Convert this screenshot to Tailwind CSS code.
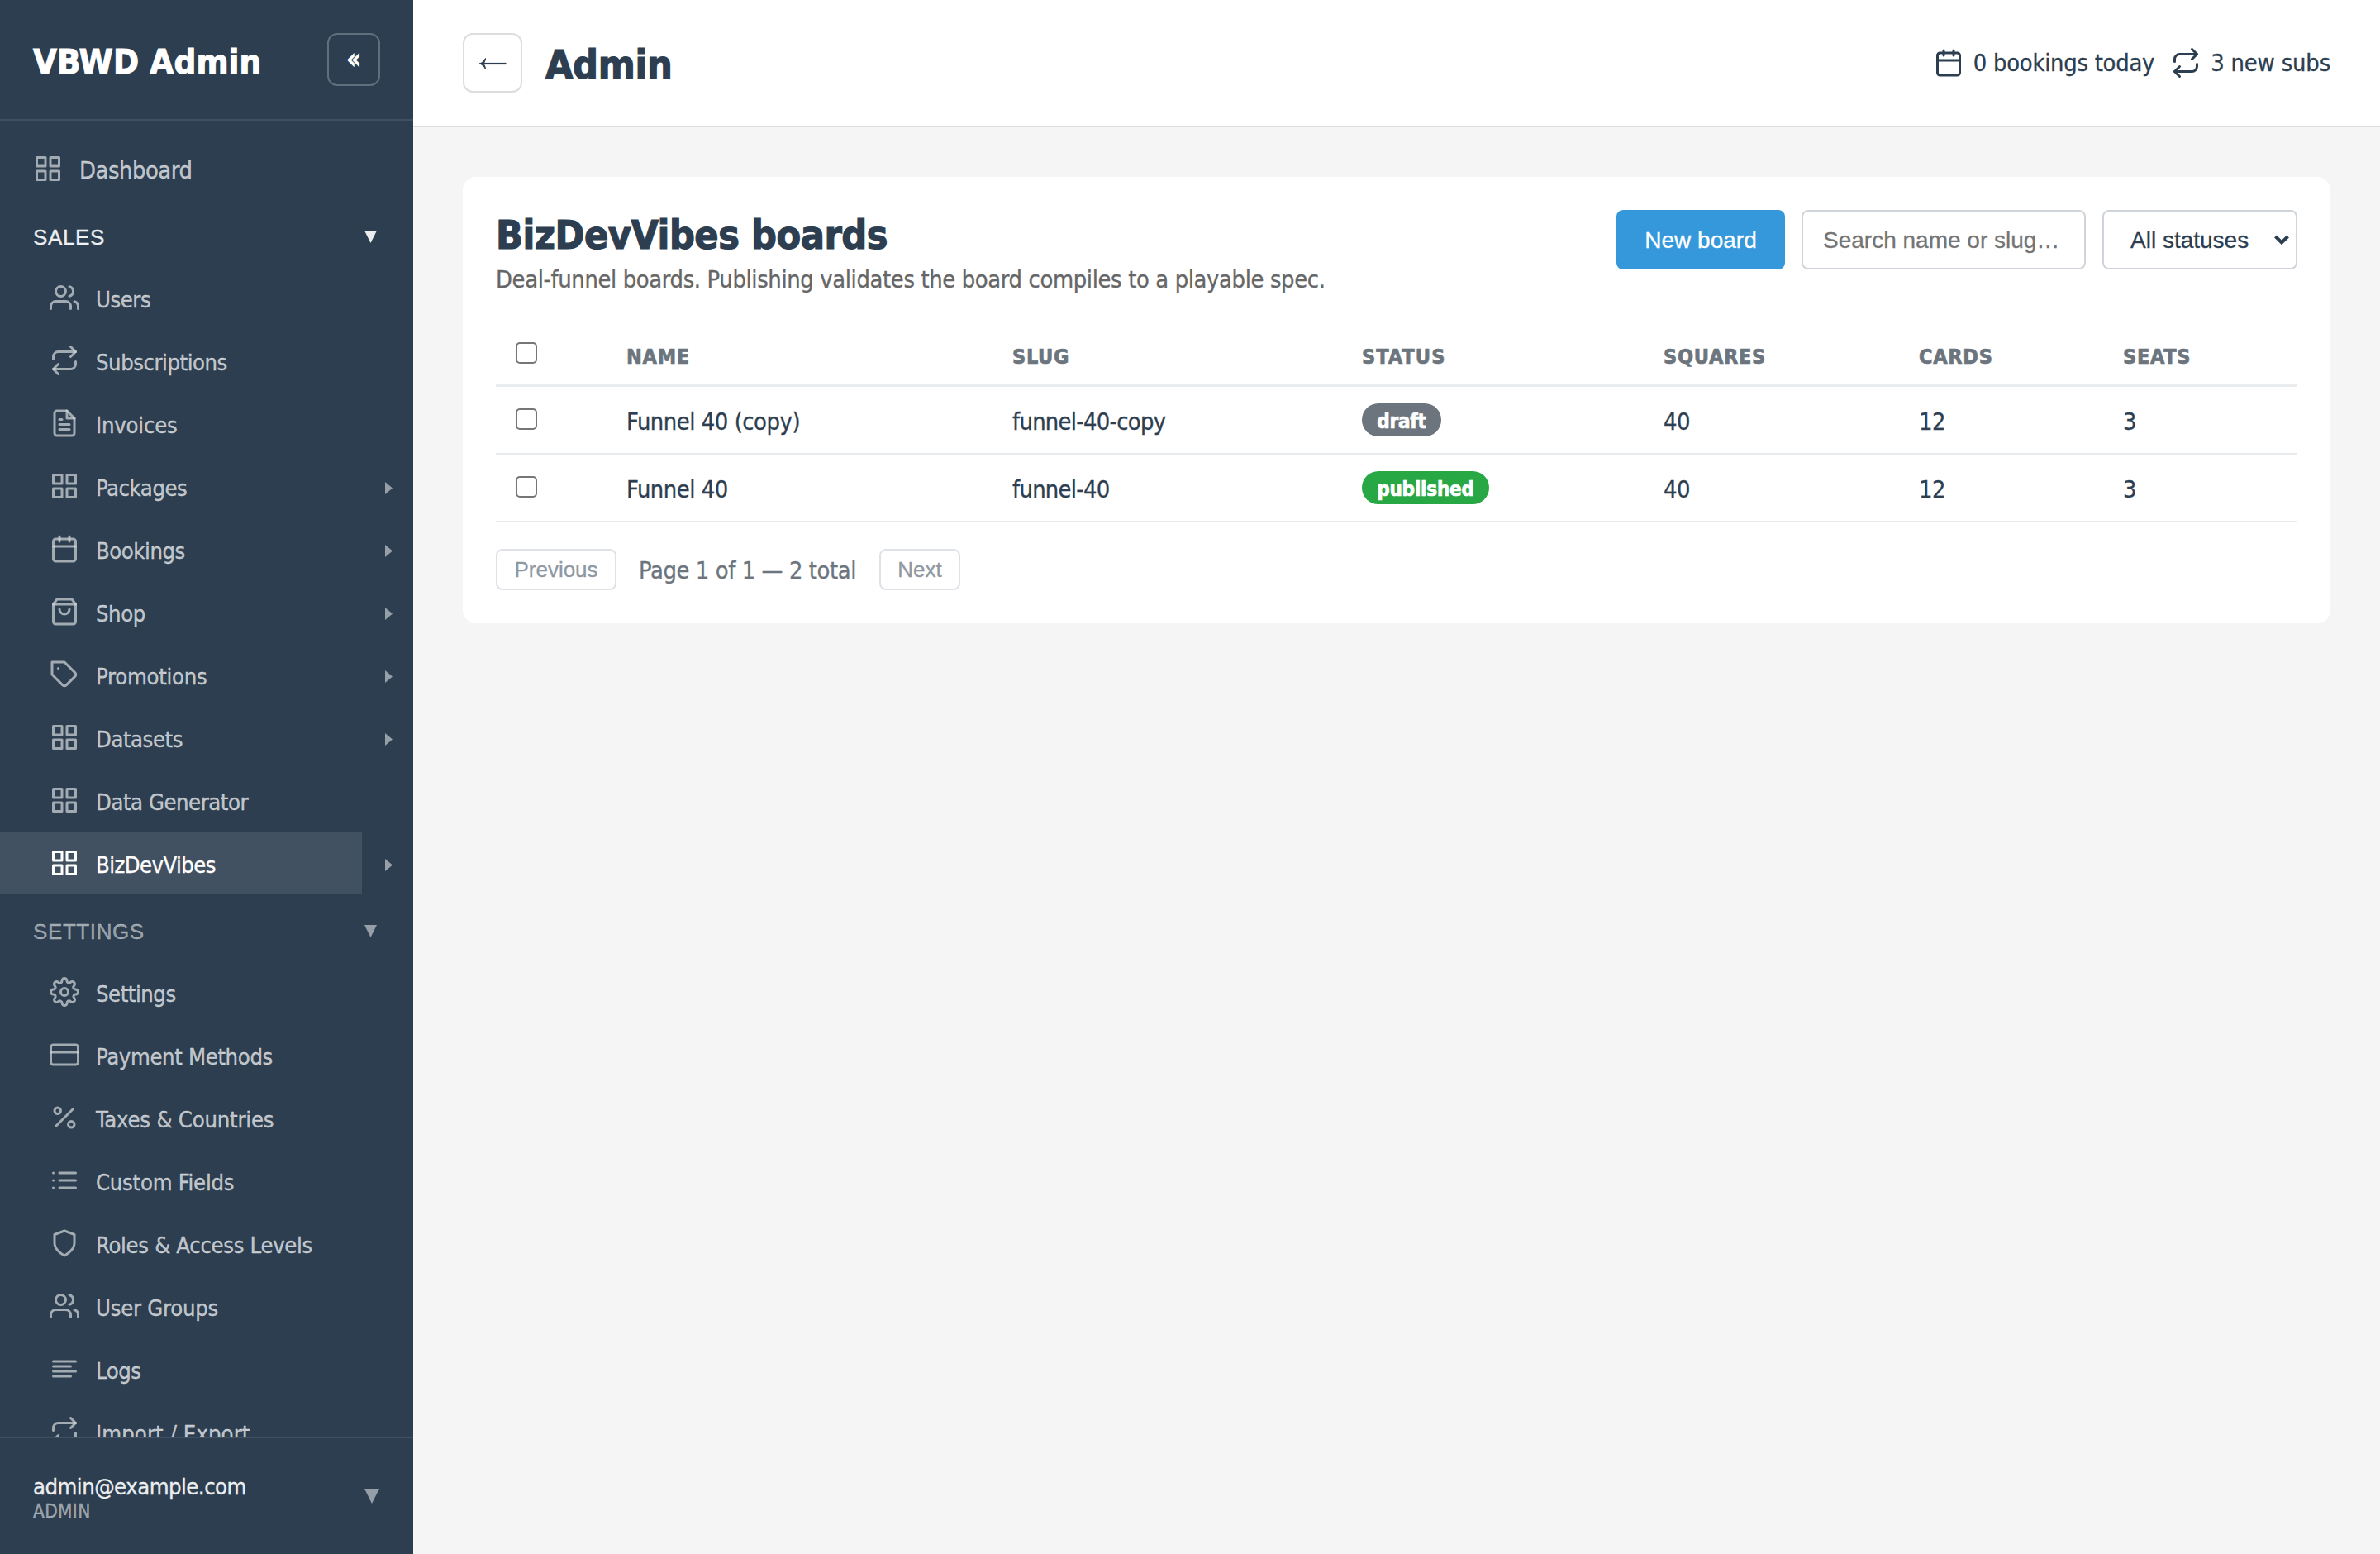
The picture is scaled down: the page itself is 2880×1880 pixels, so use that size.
<!DOCTYPE html>
<html lang="en">
<head>
<meta charset="utf-8">
<title>VBWD Admin</title>
<script src="https://cdn.jsdelivr.net/npm/@tailwindcss/browser@4"></script>
</head>
<body class="w-[2880px] h-[1880px] overflow-hidden flex bg-[#f5f5f5] text-[#2c3e50] font-['DejaVu_Sans_Condensed','DejaVu_Sans',sans-serif] [-webkit-text-stroke:0.3px]">

<!-- Icon sprite -->
<svg class="hidden" aria-hidden="true">
  <symbol id="grid" viewBox="0 0 24 24"><rect x="3" y="3" width="7" height="7"/><rect x="14" y="3" width="7" height="7"/><rect x="14" y="14" width="7" height="7"/><rect x="3" y="14" width="7" height="7"/></symbol>
  <symbol id="users" viewBox="0 0 24 24"><path d="M17 21v-2a4 4 0 0 0-4-4H5a4 4 0 0 0-4 4v2"/><circle cx="9" cy="7" r="4"/><path d="M23 21v-2a4 4 0 0 0-3-3.87"/><path d="M16 3.13a4 4 0 0 1 0 7.75"/></symbol>
  <symbol id="repeat" viewBox="0 0 24 24"><path d="M17 1l4 4-4 4"/><path d="M3 11V9a4 4 0 0 1 4-4h14"/><path d="M7 23l-4-4 4-4"/><path d="M21 13v2a4 4 0 0 1-4 4H3"/></symbol>
  <symbol id="file" viewBox="0 0 24 24"><path d="M14 2H6a2 2 0 0 0-2 2v16a2 2 0 0 0 2 2h12a2 2 0 0 0 2-2V8z"/><path d="M14 2v6h6"/><path d="M16 13H8"/><path d="M16 17H8"/><path d="M10 9H8"/></symbol>
  <symbol id="calendar" viewBox="0 0 24 24"><rect x="3" y="4" width="18" height="18" rx="2"/><path d="M16 2v4"/><path d="M8 2v4"/><path d="M3 10h18"/></symbol>
  <symbol id="bag" viewBox="0 0 24 24"><path d="M6 2L3 6v14a2 2 0 0 0 2 2h14a2 2 0 0 0 2-2V6l-3-4z"/><path d="M3 6h18"/><path d="M16 10a4 4 0 0 1-8 0"/></symbol>
  <symbol id="tag" viewBox="0 0 24 24"><path d="M20.59 13.41l-7.17 7.17a2 2 0 0 1-2.83 0L2 12V2h10l8.59 8.59a2 2 0 0 1 0 2.82z"/><path d="M7 7h.01"/></symbol>
  <symbol id="gear" viewBox="0 0 24 24"><circle cx="12" cy="12" r="3"/><path d="M19.4 15a1.65 1.65 0 0 0 .33 1.82l.06.06a2 2 0 0 1-2.83 2.83l-.06-.06a1.65 1.65 0 0 0-1.82-.33 1.65 1.65 0 0 0-1 1.51V21a2 2 0 0 1-4 0v-.09A1.65 1.65 0 0 0 9 19.4a1.65 1.65 0 0 0-1.82.33l-.06.06a2 2 0 0 1-2.83-2.83l.06-.06a1.65 1.65 0 0 0 .33-1.82 1.65 1.65 0 0 0-1.51-1H3a2 2 0 0 1 0-4h.09A1.65 1.65 0 0 0 4.6 9a1.65 1.65 0 0 0-.33-1.82l-.06-.06a2 2 0 0 1 2.83-2.83l.06.06a1.65 1.65 0 0 0 1.82.33H9a1.65 1.65 0 0 0 1-1.51V3a2 2 0 0 1 4 0v.09a1.65 1.65 0 0 0 1 1.51 1.65 1.65 0 0 0 1.82-.33l.06-.06a2 2 0 0 1 2.83 2.83l-.06.06a1.65 1.65 0 0 0-.33 1.82V9a1.65 1.65 0 0 0 1.51 1H21a2 2 0 0 1 0 4h-.09a1.65 1.65 0 0 0-1.51 1z"/></symbol>
  <symbol id="card" viewBox="0 0 24 24"><rect x="1" y="4" width="22" height="16" rx="2"/><path d="M1 10h22"/></symbol>
  <symbol id="percent" viewBox="0 0 24 24"><path d="M19 5L5 19"/><circle cx="6.5" cy="6.5" r="2.5"/><circle cx="17.5" cy="17.5" r="2.5"/></symbol>
  <symbol id="list" viewBox="0 0 24 24"><path d="M8 6h13"/><path d="M8 12h13"/><path d="M8 18h13"/><path d="M3 6h.01"/><path d="M3 12h.01"/><path d="M3 18h.01"/></symbol>
  <symbol id="shield" viewBox="0 0 24 24"><path d="M12 22s8-4 8-10V5l-8-3-8 3v7c0 6 8 10 8 10z"/></symbol>
  <symbol id="lines" viewBox="0 0 24 24"><path d="M17 10H3"/><path d="M21 6H3"/><path d="M21 14H3"/><path d="M17 18H3"/></symbol>
  <symbol id="caret" viewBox="0 0 9 15"><path d="M0 0L9 7.5L0 15z"/></symbol>
  <symbol id="down" viewBox="0 0 16 16"><path d="M0 0H16L8 16z"/></symbol>
</svg>

<aside class="w-[500px] h-full shrink-0 flex flex-col bg-[#2c3e50] text-white">
  <div class="h-[146px] shrink-0 flex items-center justify-between pl-10 pr-10 border-b-2 border-white/10">
    <h2 class="pt-[6px] text-[41.6px] leading-[50px] font-bold tracking-[0.15px] [-webkit-text-stroke:1px]">VBWD Admin</h2>
    <button class="size-16 rounded-xl border-2 border-white/25 flex items-center justify-center pb-[2px] text-[32px] leading-none [-webkit-text-stroke:1.2px]">«</button>
  </div>

  <nav class="flex-1 min-h-0 overflow-hidden pt-5 text-[27.2px] leading-[34px] tracking-[-0.45px] text-white/70 [&_svg]:shrink-0">
    <a class="h-[76px] flex items-center gap-5 pl-10 text-[28.8px]"><svg class="size-9 fill-none stroke-current stroke-2 opacity-80 [stroke-linecap:round] [stroke-linejoin:round]"><use href="#grid"/></svg><span class="pt-1">Dashboard</span></a>

    <button class="w-full h-20 flex items-center justify-between pt-[9px] pl-10 pr-11 font-['Liberation_Sans',sans-serif] text-[26px] tracking-[0.6px] text-white/90"><span>SALES</span><svg class="w-[15px] h-[15px] fill-current"><use href="#down"/></svg></button>
    <a class="h-[76px] flex items-center gap-5 pl-[60px]"><svg class="size-9 fill-none stroke-current stroke-2 opacity-80 [stroke-linecap:round] [stroke-linejoin:round]"><use href="#users"/></svg><span class="pt-[5px]">Users</span></a>
    <a class="h-[76px] flex items-center gap-5 pl-[60px]"><svg class="size-9 fill-none stroke-current stroke-2 opacity-80 [stroke-linecap:round] [stroke-linejoin:round]"><use href="#repeat"/></svg><span class="pt-[5px]">Subscriptions</span></a>
    <a class="h-[76px] flex items-center gap-5 pl-[60px]"><svg class="size-9 fill-none stroke-current stroke-2 opacity-80 [stroke-linecap:round] [stroke-linejoin:round]"><use href="#file"/></svg><span class="pt-[5px] tracking-[-0.2px]">Invoices</span></a>
    <div class="h-[76px] flex items-center pr-[25px]"><a class="w-[438px] h-full flex items-center gap-5 pl-[60px]"><svg class="size-9 fill-none stroke-current stroke-2 opacity-80 [stroke-linecap:round] [stroke-linejoin:round]"><use href="#grid"/></svg><span class="pt-[5px]">Packages</span></a><svg class="w-[9px] h-[15px] ml-auto mt-1 fill-white/50"><use href="#caret"/></svg></div>
    <div class="h-[76px] flex items-center pr-[25px]"><a class="w-[438px] h-full flex items-center gap-5 pl-[60px]"><svg class="size-9 fill-none stroke-current stroke-2 opacity-80 [stroke-linecap:round] [stroke-linejoin:round]"><use href="#calendar"/></svg><span class="pt-[5px]">Bookings</span></a><svg class="w-[9px] h-[15px] ml-auto mt-1 fill-white/50"><use href="#caret"/></svg></div>
    <div class="h-[76px] flex items-center pr-[25px]"><a class="w-[438px] h-full flex items-center gap-5 pl-[60px]"><svg class="size-9 fill-none stroke-current stroke-2 opacity-80 [stroke-linecap:round] [stroke-linejoin:round]"><use href="#bag"/></svg><span class="pt-[5px]">Shop</span></a><svg class="w-[9px] h-[15px] ml-auto mt-1 fill-white/50"><use href="#caret"/></svg></div>
    <div class="h-[76px] flex items-center pr-[25px]"><a class="w-[438px] h-full flex items-center gap-5 pl-[60px]"><svg class="size-9 fill-none stroke-current stroke-2 opacity-80 [stroke-linecap:round] [stroke-linejoin:round]"><use href="#tag"/></svg><span class="pt-[5px] tracking-[-0.25px]">Promotions</span></a><svg class="w-[9px] h-[15px] ml-auto mt-1 fill-white/50"><use href="#caret"/></svg></div>
    <div class="h-[76px] flex items-center pr-[25px]"><a class="w-[438px] h-full flex items-center gap-5 pl-[60px]"><svg class="size-9 fill-none stroke-current stroke-2 opacity-80 [stroke-linecap:round] [stroke-linejoin:round]"><use href="#grid"/></svg><span class="pt-[5px]">Datasets</span></a><svg class="w-[9px] h-[15px] ml-auto mt-1 fill-white/50"><use href="#caret"/></svg></div>
    <a class="h-[76px] flex items-center gap-5 pl-[60px]"><svg class="size-9 fill-none stroke-current stroke-2 opacity-80 [stroke-linecap:round] [stroke-linejoin:round]"><use href="#grid"/></svg><span class="pt-[5px]">Data Generator</span></a>
    <div class="h-[76px] flex items-center pr-[25px]"><a class="w-[438px] h-full flex items-center gap-5 pl-[60px] bg-white/10 text-white"><svg class="size-9 fill-none stroke-current stroke-2 [stroke-linecap:round] [stroke-linejoin:round]"><use href="#grid"/></svg><span class="pt-[5px] tracking-[-0.55px]">BizDevVibes</span></a><svg class="w-[9px] h-[15px] ml-auto mt-1 fill-white/50"><use href="#caret"/></svg></div>

    <button class="w-full h-20 flex items-center justify-between pt-[9px] pl-10 pr-11 font-['Liberation_Sans',sans-serif] text-[26px] tracking-[0.6px] text-white/50"><span>SETTINGS</span><svg class="w-[15px] h-[15px] fill-current"><use href="#down"/></svg></button>
    <a class="h-[76px] flex items-center gap-5 pl-[60px]"><svg class="size-9 fill-none stroke-current stroke-2 opacity-80 [stroke-linecap:round] [stroke-linejoin:round]"><use href="#gear"/></svg><span class="pt-[5px]">Settings</span></a>
    <a class="h-[76px] flex items-center gap-5 pl-[60px]"><svg class="size-9 fill-none stroke-current stroke-2 opacity-80 [stroke-linecap:round] [stroke-linejoin:round]"><use href="#card"/></svg><span class="pt-[5px] tracking-[-0.35px]">Payment Methods</span></a>
    <a class="h-[76px] flex items-center gap-5 pl-[60px]"><svg class="size-9 fill-none stroke-current stroke-2 opacity-80 [stroke-linecap:round] [stroke-linejoin:round]"><use href="#percent"/></svg><span class="pt-[5px] tracking-[-0.2px]">Taxes &amp; Countries</span></a>
    <a class="h-[76px] flex items-center gap-5 pl-[60px]"><svg class="size-9 fill-none stroke-current stroke-2 opacity-80 [stroke-linecap:round] [stroke-linejoin:round]"><use href="#list"/></svg><span class="pt-[5px] tracking-[-0.25px]">Custom Fields</span></a>
    <a class="h-[76px] flex items-center gap-5 pl-[60px]"><svg class="size-9 fill-none stroke-current stroke-2 opacity-80 [stroke-linecap:round] [stroke-linejoin:round]"><use href="#shield"/></svg><span class="pt-[5px] tracking-[-0.32px]">Roles &amp; Access Levels</span></a>
    <a class="h-[76px] flex items-center gap-5 pl-[60px]"><svg class="size-9 fill-none stroke-current stroke-2 opacity-80 [stroke-linecap:round] [stroke-linejoin:round]"><use href="#users"/></svg><span class="pt-[5px] tracking-[-0.25px]">User Groups</span></a>
    <a class="h-[76px] flex items-center gap-5 pl-[60px]"><svg class="size-9 fill-none stroke-current stroke-2 opacity-80 [stroke-linecap:round] [stroke-linejoin:round]"><use href="#lines"/></svg><span class="pt-[5px]">Logs</span></a>
    <a class="h-[76px] flex items-center gap-5 pl-[60px]"><svg class="size-9 fill-none stroke-current stroke-2 opacity-80 [stroke-linecap:round] [stroke-linejoin:round]"><use href="#repeat"/></svg><span class="pt-[5px] tracking-[0.1px]">Import / Export</span></a>
  </nav>

  <div class="h-[142px] shrink-0 flex items-center justify-between pl-10 pr-[41px] border-t-2 border-white/10">
    <div class="flex flex-col pt-[4px]">
      <span class="text-[27.2px] leading-[32px] tracking-[-0.5px] text-white/90">admin@example.com</span>
      <span class="text-[22.4px] leading-[27px] tracking-[0.4px] text-white/50">ADMIN</span>
    </div>
    <svg class="w-[18px] h-[18px] fill-white/50"><use href="#down"/></svg>
  </div>
</aside>

<main class="flex-1 min-w-0 flex flex-col">
  <header class="h-[154px] shrink-0 flex items-center justify-between px-[60px] bg-white border-b-2 border-[#ddd]">
    <div class="flex items-center gap-7">
      <button class="w-[72px] h-[72px] rounded-xl border-2 border-[#ddd] flex items-center justify-center"><svg class="w-[34px] h-[14px] mt-[2px] fill-none stroke-current stroke-[2.2] overflow-visible" viewBox="0 0 34 14"><path d="M3 7H33.500"/><path d="M8.500 0.500C7 3.500 4 6.500 1 7C4 7.500 7 10.500 8.500 13.500C8.500 11 7 8.500 6 7C7 5.500 8.500 3 8.500 0.500Z" class="fill-current stroke-1"/></svg></button>
      <h1 class="pt-[4px] text-[48px] leading-[58px] font-bold tracking-[-0.3px] [-webkit-text-stroke:1.2px]">Admin</h1>
    </div>
    <div class="flex items-center gap-5 text-[28.8px] leading-[34px] tracking-[-0.25px]">
      <div class="flex items-center gap-3"><svg class="size-9 fill-none stroke-current stroke-2 [stroke-linecap:round] [stroke-linejoin:round]"><use href="#calendar"/></svg><span>0 bookings today</span></div>
      <div class="flex items-center gap-3"><svg class="size-9 fill-none stroke-current stroke-2 [stroke-linecap:round] [stroke-linejoin:round]"><use href="#repeat"/></svg><span class="tracking-[-0.15px]">3 new subs</span></div>
    </div>
  </header>

  <section class="mt-[60px] mx-[60px] p-10 h-[540px] bg-white rounded-2xl">
    <div class="h-[142px] flex items-start justify-between">
      <div>
        <h2 class="pt-[1px] text-[48px] leading-[58px] font-bold tracking-[-0.45px] [-webkit-text-stroke:1.2px]">BizDevVibes boards</h2>
        <p class="mt-[8px] text-[28.8px] leading-[34px] tracking-[-0.36px] text-[#666]">Deal-funnel boards. Publishing validates the board compiles to a playable spec.</p>
      </div>
      <div class="flex gap-5 font-['Liberation_Sans',sans-serif] text-[28px] leading-[34px]">
        <button class="w-[204px] h-[72px] pt-[2px] rounded-lg bg-[#3498db] text-white">New board</button>
        <input type="text" placeholder="Search name or slug…" class="w-[344px] h-[72px] px-6 pt-[2px] rounded-lg border-2 border-[#ced4da] bg-white placeholder-[#757575]">
        <div class="w-[236px] h-[72px] pl-8 pr-2 flex items-center justify-between rounded-lg border-2 border-[#ced4da] bg-white"><span class="pt-[2px]">All statuses</span><svg class="w-[18px] h-[13px] fill-none stroke-current stroke-4" viewBox="0 0 18 13"><path d="M1.500 2L9 9.500L16.500 2"/></svg></div>
      </div>
    </div>

    <div class="text-[28.8px] leading-[34px] tracking-[-0.45px]">
      <div class="grid grid-cols-[134px_467px_423px_365px_309px_247px_235px] items-center h-[72px] border-b-4 border-[#e9ecef] [&>*]:ml-6 text-[25px] font-bold tracking-[0.7px] [-webkit-text-stroke:0.7px] text-[#6c757d]">
        <i class="size-[26px] mb-[6px] rounded-[5px] border-2 border-[#767676] bg-white"></i><span class="pt-[3px]">NAME</span><span class="pt-[3px]">SLUG</span><span class="pt-[3px] tracking-[1.1px]">STATUS</span><span class="pt-[3px]">SQUARES</span><span class="pt-[3px]">CARDS</span><span class="pt-[3px]">SEATS</span>
      </div>
      <div class="grid grid-cols-[134px_467px_423px_365px_309px_247px_235px] items-center h-[82px] border-b-2 border-[#e9ecef] [&>*]:ml-6">
        <i class="size-[26px] mb-[2px] rounded-[5px] border-2 border-[#767676] bg-white"></i><span class="pt-1">Funnel 40 (copy)</span><span class="pt-1 tracking-[-0.7px]">funnel-40-copy</span><span class="w-24 h-10 pt-[4px] flex items-center justify-center rounded-[20px] bg-[#6c757d] text-white text-[24px] font-bold tracking-[-0.2px] [-webkit-text-stroke:0.7px]">draft</span><span class="pt-1">40</span><span class="pt-1">12</span><span class="pt-1">3</span>
      </div>
      <div class="grid grid-cols-[134px_467px_423px_365px_309px_247px_235px] items-center h-[82px] border-b-2 border-[#e9ecef] [&>*]:ml-6">
        <i class="size-[26px] mb-[2px] rounded-[5px] border-2 border-[#767676] bg-white"></i><span class="pt-1">Funnel 40</span><span class="pt-1 tracking-[-0.7px]">funnel-40</span><span class="w-[154px] h-10 pt-[4px] flex items-center justify-center rounded-[20px] bg-[#28a745] text-white text-[24px] font-bold tracking-[-0.2px] [-webkit-text-stroke:0.7px]">published</span><span class="pt-1">40</span><span class="pt-1">12</span><span class="pt-1">3</span>
      </div>
    </div>

    <div class="mt-8 h-[50px] flex items-center text-[#6c757d]">
      <button class="w-[146px] h-[50px] rounded-lg border-2 border-[#dee2e6] font-['Liberation_Sans',sans-serif] text-[26px] leading-[30px] text-[#8f98a1]">Previous</button>
      <span class="w-[318px] pl-[27px] pt-[2px] text-[28.8px] leading-[34px] tracking-[-0.4px]">Page 1 of 1 — 2 total</span>
      <button class="w-[98px] h-[50px] rounded-lg border-2 border-[#dee2e6] font-['Liberation_Sans',sans-serif] text-[26px] leading-[30px] text-[#8f98a1]">Next</button>
    </div>
  </section>
</main>
</body>
</html>
